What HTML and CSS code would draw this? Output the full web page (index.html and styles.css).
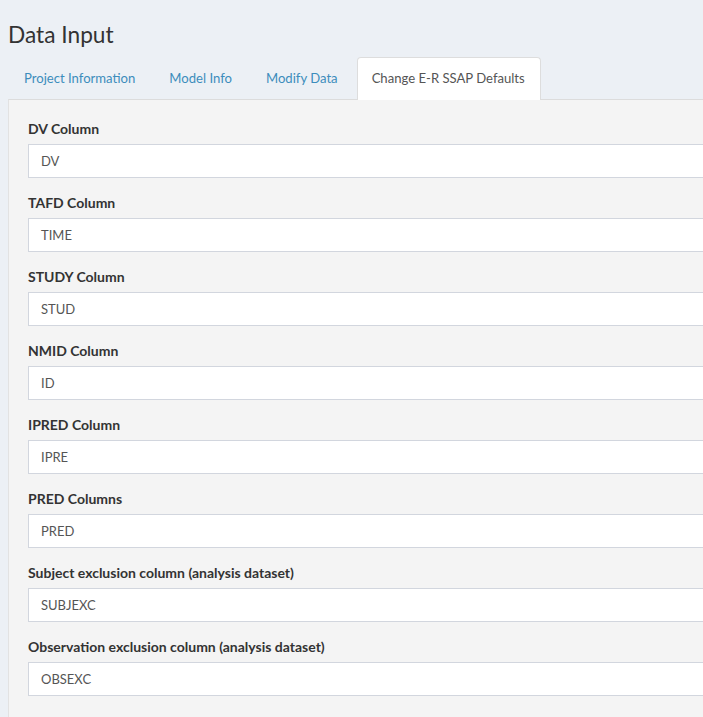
FILE: index.html
```html
<!DOCTYPE html>
<html>
<head>
<meta charset="utf-8">
<title>Data Input</title>
<link rel="stylesheet" href="styles.css">
</head>
<body>
<div class="page">
  <h2 class="title">Data Input</h2>
  <div class="tabs">
    <ul class="nav">
      <li class="tab"><a>Project Information</a></li>
      <li class="tab"><a>Model Info</a></li>
      <li class="tab"><a>Modify Data</a></li>
      <li class="tab active"><a>Change E-R SSAP Defaults</a></li>
    </ul>
    <div class="panel">
      <div class="group"><label>DV Column</label><div class="input">DV</div></div>
      <div class="group"><label>TAFD Column</label><div class="input">TIME</div></div>
      <div class="group"><label>STUDY Column</label><div class="input">STUD</div></div>
      <div class="group"><label>NMID Column</label><div class="input">ID</div></div>
      <div class="group"><label>IPRED Column</label><div class="input">IPRE</div></div>
      <div class="group"><label>PRED Columns</label><div class="input">PRED</div></div>
      <div class="group"><label>Subject exclusion column (analysis dataset)</label><div class="input">SUBJEXC</div></div>
      <div class="group"><label>Observation exclusion column (analysis dataset)</label><div class="input">OBSEXC</div></div>
    </div>
  </div>
</div>
</body>
</html>
```

FILE: styles.css
```css
html, body {
  margin: 0;
  padding: 0;
  background: #ecf0f5;
  overflow: hidden;
}
body {
  font-family: "Source Sans Pro", Lato, "Liberation Sans", sans-serif;
  font-size: 14px;
  color: #333;
}
.page {
  width: 1000px;
  padding-left: 8px;
}
.title {
  margin: 0;
  padding-top: 21px;
  font-size: 22.7px;
  font-weight: 400;
  line-height: 27px;
  color: #333;
}
.nav {
  list-style: none;
  margin: 9px 0 0 0;
  padding: 0 0 0 1px;
  display: flex;
  gap: 4px;
  height: 42px;
}
.tab a {
  display: block;
  padding: 0 15px;
  line-height: 42px;
  font-size: 13.1px;
  color: #3c8dbc;
}
.tab.active {
  background: #fff;
  border: 1px solid #ddd;
  border-bottom: none;
  border-radius: 4px 4px 0 0;
  position: relative;
  z-index: 1;
  height: 42px;
}
.tab.active a {
  color: #555;
  line-height: 41px;
  padding: 0 15px 0 14px;
}
.panel {
  background: #f4f4f4;
  border-top: 1px solid #dcdcdc;
  border-left: 1px solid #e2e2e2;
  padding: 19px 20px 20px 19px;
  height: 700px;
}
.group {
  margin-bottom: 15px;
}
.group label {
  display: block;
  font-weight: 700;
  line-height: 20px;
  margin-bottom: 5px;
  color: #333;
}
.input {
  height: 34px;
  box-sizing: border-box;
  background: #fff;
  border: 1px solid #d2d6de;
  padding: 0 12px;
  line-height: 32px;
  font-size: 13px;
  color: #555;
}
```
